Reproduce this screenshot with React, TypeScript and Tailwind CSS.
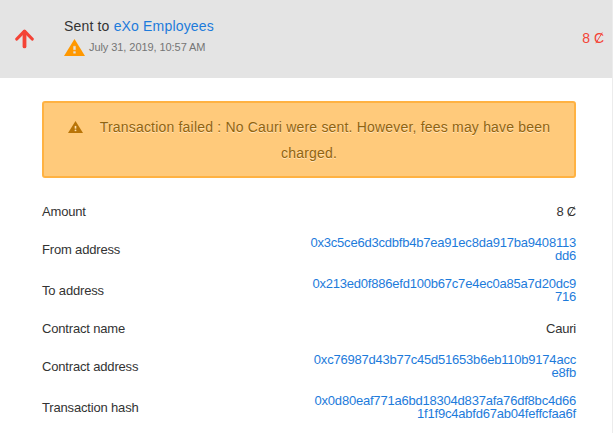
import React from "react";

type Detail = { label: string; value: React.ReactNode; link?: boolean };

function Cauri() {
  return (
    <span className="relative inline-block leading-none">
      C
      <svg viewBox="0 0 10 14" className="absolute inset-0 h-full w-full" aria-hidden="true">
        <path d="M1.8 12.2 8.2 1.6" stroke="currentColor" strokeWidth=".9" fill="none" />
      </svg>
    </span>
  );
}

const details: Detail[] = [
  { label: "Amount", value: <>8 <Cauri /></> },
  { label: "From address", value: "0x3c5ce6d3cdbfb4b7ea91ec8da917ba9408113dd6", link: true },
  { label: "To address", value: "0x213ed0f886efd100b67c7e4ec0a85a7d20dc9716", link: true },
  { label: "Contract name", value: "Cauri" },
  { label: "Contract address", value: "0xc76987d43b77c45d51653b6eb110b9174acce8fb", link: true },
  {
    label: "Transaction hash",
    value: "0x0d80eaf771a6bd18304d837afa76df8bc4d661f1f9c4abfd67ab04feffcfaa6f",
    link: true,
  },
];

function ArrowUp() {
  return (
    <svg viewBox="0 0 20 20" className="h-5 w-5" fill="none" stroke="#f44336" strokeLinecap="round" strokeLinejoin="round">
      <path d="M9.5 17.4V3" strokeWidth="3.8" />
      <path d="M1.8 10 9.5 2.2l7.7 7.8" strokeWidth="3.2" />
    </svg>
  );
}

function Warning({ className, mark }: { className: string; mark: string }) {
  return (
    <svg viewBox="1 2 22 19" preserveAspectRatio="none" className={className}>
      <path d="M1 21h22L12 2z" fill="currentColor" />
      <path d="M13 14h-2v-4h2zm0 4h-2v-2h2z" fill={mark} stroke={mark} strokeWidth=".4" />
    </svg>
  );
}

export default function App() {
  return (
    <div className="flex h-[433px] w-[613px] flex-col overflow-hidden border-r border-[#ececec] bg-white font-['Liberation_Sans',Arial,sans-serif] text-[#333]">
      <header className="flex h-[78px] shrink-0 items-center bg-[#e4e4e4] pl-[15px] pr-2">
        <ArrowUp />
        <div className="-mt-1 ml-[29px] flex grow flex-col">
          <div className="h-5 text-[14px] leading-5 tracking-[0.17px]">
            Sent to <span className="text-[#1d7bdb]">eXo Employees</span>
          </div>
          <div className="mt-px flex h-[21px] items-center gap-1 text-[11px] tracking-[-0.07px] text-[#757575]">
            <Warning className="h-[17px] w-[21px] text-[#ff9800]" mark="#e4e4e4" />
            July 31, 2019, 10:57 AM
          </div>
        </div>
        <div className="-mt-0.5 text-[14px] leading-5 text-[#f44336]">
          8 <Cauri />
        </div>
      </header>

      <main className="flex flex-col px-[42px] pt-[23px] pr-9">
        <div className="h-[77px] rounded-[3px] border-2 border-[#ffb242] bg-[#ffca7b] px-5 pt-[11px] text-center text-[14px] leading-[26px] tracking-[0.19px] text-[#91640f] [text-shadow:0_1px_0_rgba(255,255,255,0.5)]">
          <Warning className="mr-[17px] inline-block h-3 w-[15px] align-[-1px] text-[#b97407]" mark="#ffe0ae" />
          Transaction failed : No Cauri were sent. However, fees may have been charged.
        </div>

        <dl className="mt-4 flex flex-col">
          {details.map((d) => (
            <div
              key={d.label}
              className={`flex items-center justify-between text-[13px] leading-[13px] ${d.link ? "h-[41px]" : "h-[35px]"}`}
            >
              <dt className="tracking-[-0.17px]">{d.label}</dt>
              <dd className={`w-[267px] break-all text-right tracking-[-0.21px] ${d.link ? "pb-0.5 text-[#1d7bdb]" : ""}`}>
                {d.value}
              </dd>
            </div>
          ))}
        </dl>
      </main>
    </div>
  );
}
